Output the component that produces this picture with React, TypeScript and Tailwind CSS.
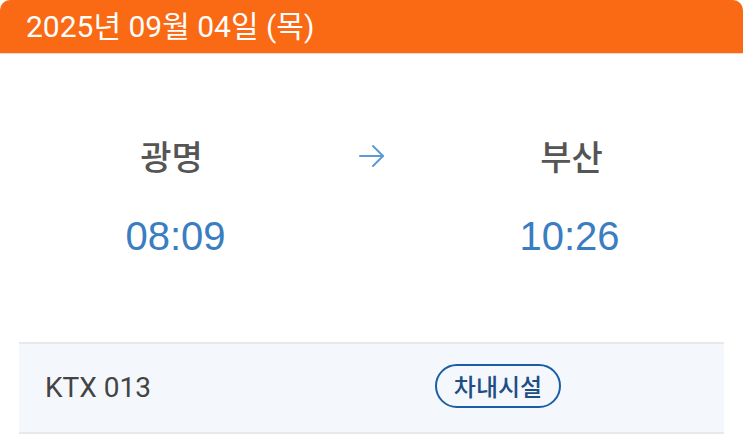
import * as React from 'react';

function ArrowRight() {
    return (
        <svg width="28" height="24" viewBox="0 0 28 24" fill="none" stroke="#5d9bd6" strokeWidth="2" strokeLinecap="round" strokeLinejoin="round">
            <path d="M2 12h23" />
            <path d="M15 2l10 10-10 10" />
        </svg>
    );
}

export default function App() {
    return (
        <div className="w-[743px] h-[435px] bg-white overflow-hidden" style={{ fontFamily: 'Roboto, "Noto Sans CJK KR", sans-serif' }}>
            <div className="h-[54px] bg-[#fa6914] rounded-t-[10px] border-b border-[#fcd9c4] flex items-center pl-[26px]">
                <span className="text-white text-[30px] leading-none font-['Roboto','Noto_Sans_CJK_KR',sans-serif]">
                    2025년 09월 04일 (목)
                </span>
            </div>

            <div className="h-[288px] pt-[81px]">
                <div className="flex justify-center">
                    <div className="w-[200px] text-center text-[34px] leading-[42px] font-medium text-[#555555] font-['Noto_Sans_CJK_KR',sans-serif]">광명</div>
                    <div className="w-[200px] h-[42px] flex items-center justify-center"><ArrowRight /></div>
                    <div className="w-[200px] text-center text-[34px] leading-[42px] font-medium text-[#555555] font-['Noto_Sans_CJK_KR',sans-serif]">부산</div>
                </div>
                <div className="flex justify-center mt-[37px]">
                    <div className="w-[200px] text-center text-[40px] leading-[44px] text-[#3a7dc1] font-['Liberation_Sans',sans-serif] pl-[8px]">08:09</div>
                    <div className="w-[200px]" />
                    <div className="w-[200px] text-center text-[40px] leading-[44px] text-[#3a7dc1] font-['Liberation_Sans',sans-serif] pr-[4px]">10:26</div>
                </div>
            </div>

            <div className="mx-[19px] h-[92px] bg-[#f4f7fb] border-y-2 border-[#e6e8ea] flex items-center">
                <div className="w-[416px] pl-[26px] text-[28px] text-[#444444] font-['Roboto',sans-serif]">KTX 013</div>
                <div className="h-[44px] w-[126px] mb-[4px] rounded-full border-2 border-[#1b5ea6] flex items-center justify-center text-[24px] font-medium text-[#1f4e85] font-['Noto_Sans_CJK_KR',sans-serif]">
                    차내시설
                </div>
            </div>
        </div>
    );
}
